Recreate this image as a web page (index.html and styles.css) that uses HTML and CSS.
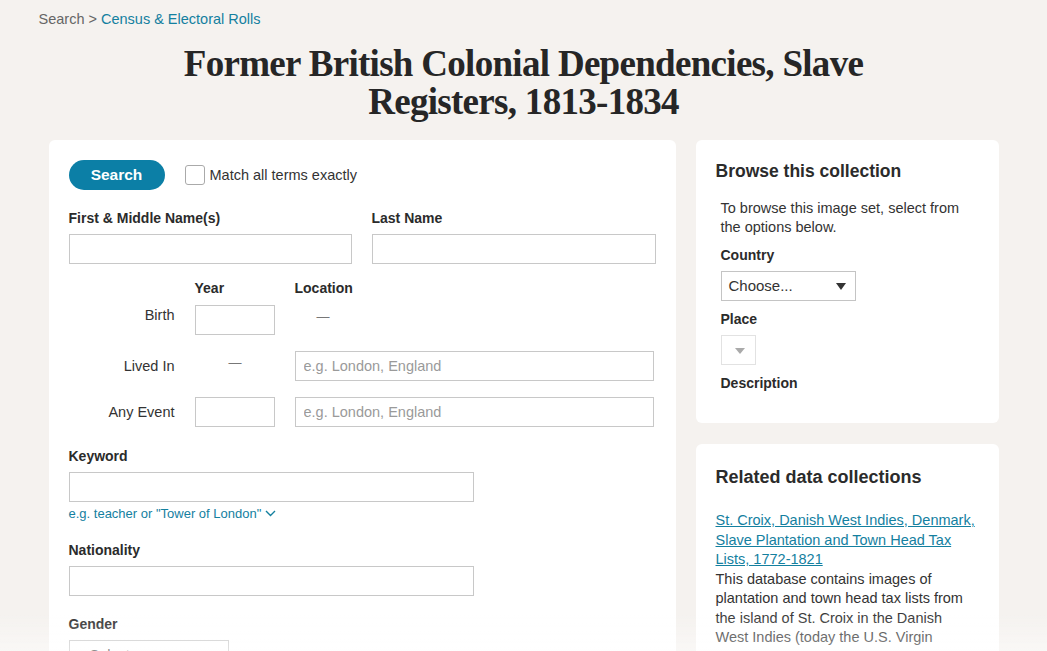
FILE: index.html
```html
<!DOCTYPE html>
<html lang="en">
<head>
<meta charset="utf-8">
<title>Former British Colonial Dependencies, Slave Registers, 1813-1834</title>
<link rel="stylesheet" href="styles.css">
</head>
<body>
<div class="page">
  <nav class="crumbs">Search &gt; <a href="#">Census &amp; Electoral Rolls</a></nav>
  <h1 class="title">Former British Colonial Dependencies, Slave Registers, 1813-1834</h1>
  <div class="layout">
    <main class="card form-card">
      <div class="top-row">
        <button class="btn-search">Search</button>
        <label class="check"><span class="box"></span>Match all terms exactly</label>
      </div>
      <div class="names">
        <div class="field">
          <label class="lbl">First &amp; Middle Name(s)</label>
          <input class="inp" type="text">
        </div>
        <div class="field">
          <label class="lbl">Last Name</label>
          <input class="inp" type="text">
        </div>
      </div>
      <div class="events">
        <span></span>
        <span class="lbl head">Year</span>
        <span class="lbl head">Location</span>

        <span class="ev-lbl birth">Birth</span>
        <input class="inp year" type="text">
        <span class="dash loc-dash">—</span>

        <span class="ev-lbl">Lived In</span>
        <span class="dash year-dash">—</span>
        <input class="inp" type="text" placeholder="e.g. London, England">

        <span class="ev-lbl">Any Event</span>
        <input class="inp year" type="text">
        <input class="inp" type="text" placeholder="e.g. London, England">
      </div>
      <div class="field narrow kw">
        <label class="lbl">Keyword</label>
        <input class="inp" type="text">
        <a class="hint" href="#">e.g. teacher or "Tower of London"
          <svg width="11" height="7" viewBox="0 0 11 7"><path d="M1 1l4.5 4.5L10 1" fill="none" stroke="currentColor" stroke-width="1.4"/></svg></a>
      </div>
      <div class="field narrow nat">
        <label class="lbl">Nationality</label>
        <input class="inp" type="text">
      </div>
      <div class="field gender">
        <label class="lbl">Gender</label>
        <div class="sel-gender">Select...</div>
      </div>
    </main>
    <aside class="side">
      <section class="card browse">
        <h2 class="side-title">Browse this collection</h2>
        <div class="browse-body">
          <p class="intro">To browse this image set, select from the options below.</p>
          <div class="lbl b-lbl">Country</div>
          <div class="sel">Choose...<span class="tri"></span></div>
          <div class="lbl b-lbl">Place</div>
          <div class="sel small"><span class="tri grey"></span></div>
          <div class="lbl b-lbl">Description</div>
        </div>
      </section>
      <section class="card related">
        <h2 class="side-title big">Related data collections</h2>
        <a class="rel-link" href="#">St. Croix, Danish West Indies, Denmark, Slave Plantation and Town Head Tax Lists, 1772-1821</a>
        <p class="rel-desc">This database contains images of plantation and town head tax lists from the island of St. Croix in the Danish West Indies (today the U.S. Virgin Islands) from 1772-1821. Some of the records also include lists of slaves.</p>
      </section>
    </aside>
  </div>
</div>
<div class="fade"></div>
</body>
</html>
```
FILE: styles.css
```css
* { box-sizing: border-box; }
html, body { margin: 0; padding: 0; }
body {
  background: #f5f2ef;
  font-family: "Liberation Sans", Arial, sans-serif;
  color: #2b2b2b;
  overflow: hidden;
  height: 651px;
}
.page {
  width: 950px;
  margin: 0 auto;
}
.crumbs {
  margin: 11px 0 0 -10px;
  font-size: 14.5px;
  line-height: 16px;
  color: #666;
}
.crumbs a { color: #14809f; text-decoration: none; }
.title {
  margin: 18px auto 0;
  max-width: 740px;
  text-align: center;
  font-family: "Liberation Serif", "Times New Roman", serif;
  font-weight: bold;
  font-size: 37px;
  line-height: 38px;
  letter-spacing: -0.7px;
  color: #262626;
}
.layout {
  display: grid;
  grid-template-columns: 627px 303px;
  gap: 20px;
  margin-top: 19px;
  align-items: start;
}
.card {
  background: #fff;
  border-radius: 6px;
}
.form-card {
  padding: 20px 20px 40px;
  min-height: 600px;
}
.top-row {
  display: flex;
  align-items: center;
  gap: 20px;
}
.btn-search {
  width: 96px;
  height: 30px;
  border: 0;
  border-radius: 15px;
  background: #0c7fa6;
  color: #fff;
  font-family: inherit;
  font-weight: bold;
  font-size: 15.5px;
  padding: 0;
}
.check {
  display: flex;
  align-items: center;
  gap: 5px;
  font-size: 14.5px;
  color: #333;
}
.box {
  width: 20px;
  height: 20px;
  border: 1px solid #aaa;
  border-radius: 3px;
  background: #fff;
}
.names {
  display: grid;
  grid-template-columns: 283px 284px;
  gap: 20px;
  margin-top: 20px;
}
.field { display: flex; flex-direction: column; }
.lbl {
  font-weight: bold;
  font-size: 14px;
  line-height: 16px;
  color: #2b2b2b;
}
.field .lbl { margin-bottom: 8px; }
.inp {
  height: 30px;
  border: 1px solid #c8c8c8;
  border-radius: 0;
  padding: 0 8px;
  font-family: inherit;
  font-size: 14.5px;
  color: #333;
  background: #fff;
  width: 100%;
}
.inp::placeholder { color: #9a9a9a; }
.events {
  display: grid;
  grid-template-columns: 106px 80px 359px;
  column-gap: 20px;
  row-gap: 16px;
  margin-top: 16px;
  align-items: center;
}
.events .head { align-self: end; margin-bottom: -7px; }
.ev-lbl {
  text-align: right;
  font-size: 14.5px;
  color: #333;
}
.ev-lbl.birth { margin-top: -10px; }
.dash { color: #777; font-size: 13px; }
.loc-dash { padding-left: 22px; margin-top: -8px; }
.year-dash { padding-left: 34px; margin-top: -8px; }
.narrow { width: 405px; }
.kw { margin-top: 21px; }
.hint {
  margin-top: 4px;
  font-size: 13px;
  color: #14809f;
  text-decoration: none;
  display: flex;
  align-items: center;
  gap: 4px;
}
.nat { margin-top: 21px; }
.gender { margin-top: 20px; }
.sel-gender {
  width: 160px;
  height: 30px;
  border: 1px solid #c8c8c8;
  padding: 6px 20px;
  font-size: 14.5px;
  color: #333;
}
.side { display: flex; flex-direction: column; gap: 21px; }
.browse { padding: 21px 20px 24px; }
.side-title {
  margin: 0;
  font-size: 17.5px;
  line-height: 20px;
  font-weight: bold;
  color: #2b2b2b;
}
.side-title.big { font-size: 18px; }
.browse-body { padding-left: 5px; margin-top: 18px; }
.intro {
  margin: 0;
  font-size: 14.5px;
  line-height: 19px;
  color: #333;
}
.b-lbl { margin-top: 10px; margin-bottom: 8px; }
.sel {
  position: relative;
  width: 135px;
  height: 30px;
  border: 1px solid #c4c4c4;
  padding: 0 7px;
  font-size: 15px;
  line-height: 28px;
  color: #333;
}
.sel.small { width: 35px; border-color: #e2e2e2; }
.tri {
  position: absolute;
  right: 9px;
  top: 11px;
  width: 0;
  height: 0;
  border-left: 5px solid transparent;
  border-right: 5px solid transparent;
  border-top: 7px solid #333;
}
.tri.grey { border-top-color: #aaa; right: 10px; top: 12px; border-top-width: 6px; }
.related { padding: 23px 20px 30px; }
.rel-link {
  display: block;
  margin-top: 24px;
  font-size: 14.5px;
  line-height: 19.5px;
  color: #14809f;
  text-decoration: underline;
}
.rel-desc {
  margin: 0;
  font-size: 14.5px;
  line-height: 19.5px;
  color: #333;
}
.fade {
  position: fixed;
  left: 0;
  right: 0;
  bottom: 0;
  height: 40px;
  background: linear-gradient(rgba(255,255,255,0), rgba(255,255,255,0.45));
  pointer-events: none;
}
```
